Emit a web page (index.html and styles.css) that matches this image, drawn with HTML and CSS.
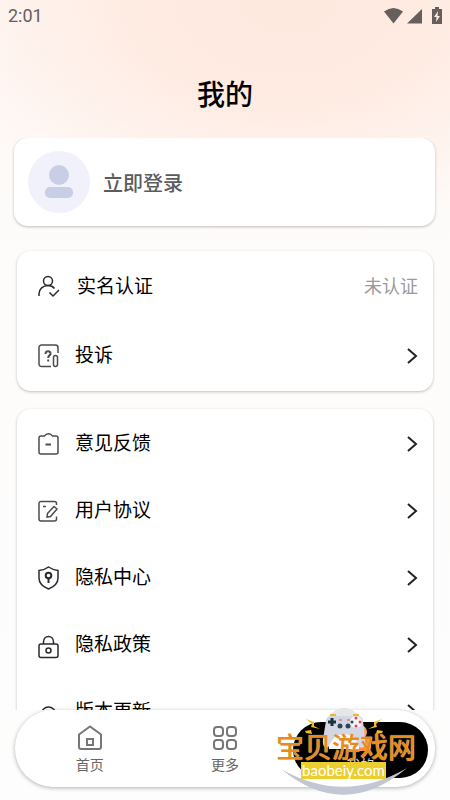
FILE: index.html
```
<!DOCTYPE html>
<html lang="zh-CN">

<head>
    <meta charset="UTF-8">
    <meta name="viewport" content="width=device-width, initial-scale=1.0">
    <title>我的</title>
    <link rel="stylesheet" href="styles.css">
</head>

<body>
    <div id="app">
        <div class="status-bar">
            <span>2:01</span>
            <div class="status-icons">
                <svg width="19" height="16" viewBox="0 0 19 16"><path d="M0 3.5Q9.500-3.500 19 3.500L9.500 15.500z" /></svg>
                <svg width="15" height="16" viewBox="0 0 15 16"><path d="M15 1v14.500H0z" /></svg>
                <svg class="battery" width="10" height="17" viewBox="0 0 10 17">
                    <path d="M3 0h4v2h3v15H0V2h3z" />
                    <path class="bolt" d="M6 4L2 10h2.500L4 15l4-6H5.500z" />
                </svg>
            </div>
        </div>

        <h1>我的</h1>

        <main>
            <button class="login card" type="button">
                <span class="avatar">
                    <svg width="28" height="34" viewBox="0 0 28 34">
                        <circle cx="14" cy="10" r="10" />
                        <rect x="0" y="22" width="28" height="11" rx="5" />
                    </svg>
                </span>
                <span>立即登录</span>
            </button>

            <ul class="card list">
                <li>
                    <a class="cell verify" href="#">
                        <svg class="icon" viewBox="0 0 22 22">
                            <circle cx="10" cy="5" r="4.500" />
                            <path d="M1 20v-2c0-5 4-8.500 9-8.500 3 0 5 1 6.500 3M11.500 16.500l3.500 3.500 6-6" />
                        </svg>
                        <span class="label">实名认证</span>
                        <span class="state">未认证</span>
                    </a>
                </li>
                <li>
                    <a class="cell" href="#">
                        <svg class="icon soft" viewBox="0 0 22 22">
                            <path d="M13 21.500H3.500a2.500 2.500 0 0 1-2.500-2.500V2.500A2.500 2.500 0 0 1 3.500 0h14A2.500 2.500 0 0 1 20 2.500V8" />
                            <rect x="15.500" y="10.500" width="4" height="11" rx="2" />
                            <path class="thick" d="M7.500 9c0-4 5.500-3.500 5 0-.3 1.500-2.300 1.500-2.300 4M10.200 14.500v2" />
                        </svg>
                        <span class="label">投诉</span>
                        <svg class="arrow" viewBox="0 0 12 18"><path d="M2 2l8 7-8 7" /></svg>
                    </a>
                </li>
            </ul>

            <ul class="card list">
                <li>
                    <a class="cell" href="#">
                        <svg class="icon soft" viewBox="0 0 22 22">
                            <path d="M3 3h3.500C7.500 1.200 8.500.7 10.500.7s3 .5 4 2.300H18a2 2 0 0 1 2 2v14a2 2 0 0 1-2 2H3a2 2 0 0 1-2-2V5a2 2 0 0 1 2-2z" />
                            <path class="thick" d="M7.500 11.500h5.500" />
                        </svg>
                        <span class="label">意见反馈</span>
                        <svg class="arrow" viewBox="0 0 12 18"><path d="M2 2l8 7-8 7" /></svg>
                    </a>
                </li>
                <li>
                    <a class="cell" href="#">
                        <svg class="icon soft" viewBox="0 0 22 22">
                            <path d="M18.500 5V3.500a2 2 0 0 0-2-2H3a2 2 0 0 0-2 2V19a2 2 0 0 0 2 2h13.500a2 2 0 0 0 2-2V16.500M5 6.500h3" />
                            <path d="M9.500 13.500l6.500-7 3 2.500-6.500 7.500-3.500.5z" />
                        </svg>
                        <span class="label">用户协议</span>
                        <svg class="arrow" viewBox="0 0 12 18"><path d="M2 2l8 7-8 7" /></svg>
                    </a>
                </li>
                <li>
                    <a class="cell" href="#">
                        <svg class="icon" viewBox="0 0 22 22">
                            <path d="M10.500 0c3 2 6 3 9.500 3.500V11c0 5.500-4.500 9-9.500 11C5.500 20 1 16.500 1 11V3.500C5 3 8 2 10.500 0z" />
                            <circle class="thick" cx="10.500" cy="8.500" r="2.800" />
                            <path class="thick" d="M10.500 11v5" />
                        </svg>
                        <span class="label">隐私中心</span>
                        <svg class="arrow" viewBox="0 0 12 18"><path d="M2 2l8 7-8 7" /></svg>
                    </a>
                </li>
                <li>
                    <a class="cell" href="#">
                        <svg class="icon" viewBox="0 0 22 22">
                            <path d="M5.500 10V8c0-7.500 10-7.500 10 0v2" />
                            <rect x="1" y="10" width="19" height="13.500" rx="2" />
                            <circle cx="10.500" cy="16.500" r="2.500" />
                        </svg>
                        <span class="label">隐私政策</span>
                        <svg class="arrow" viewBox="0 0 12 18"><path d="M2 2l8 7-8 7" /></svg>
                    </a>
                </li>
                <li>
                    <a class="cell" href="#">
                        <svg class="icon" viewBox="0 0 22 22"><circle cx="10.500" cy="13" r="7" /></svg>
                        <span class="label">版本更新</span>
                        <svg class="arrow" viewBox="0 0 12 18"><path d="M2 2l8 7-8 7" /></svg>
                    </a>
                </li>
            </ul>
        </main>

        <nav>
            <a class="tab" href="#">
                <svg width="26" height="26" viewBox="0 0 26 26">
                    <path d="M2 9.500L13 1.500l11 8V22a2 2 0 0 1-2 2H4a2 2 0 0 1-2-2z" />
                    <rect x="10" y="14" width="6" height="6" />
                </svg>
                <span>首页</span>
            </a>
            <a class="tab" href="#">
                <svg width="26" height="26" viewBox="0 0 26 26">
                    <rect x="2" y="2" width="9" height="9" rx="3" />
                    <rect x="15" y="2" width="9" height="9" rx="3" />
                    <rect x="2" y="15" width="9" height="9" rx="3" />
                    <rect x="15" y="15" width="9" height="9" rx="3" />
                </svg>
                <span>更多</span>
            </a>
            <a class="tab active" href="#">
                <svg width="26" height="26" viewBox="0 0 26 26">
                    <circle class="head" cx="13" cy="7" r="7" />
                    <rect x="2" y="13" width="22" height="13" rx="4" />
                </svg>
                <span>我的</span>
            </a>

            <div class="site-mark">
                <svg width="140" height="90" viewBox="0 0 140 90">
                    <path class="smile" d="M5 62Q68 114 131 61Q68 98 5 62z" />
                    <path class="dome" d="M50 20a18 19 0 0 1 36 0l-2 10H52z" />
                    <path class="face" d="M53 42c-2-14 8-17 15-17s17 3 15 17z" />
                    <path class="pad" d="M55 9h27c3 0 5 2 5 5l2 18c1 8-3 11-6 7-6-16-24-16-30 0-3 4-7 1-6-7l3-18c0-3 2-5 5-5z" />
                    <path class="trim" d="M54 8h6M77 8h6" />
                    <path class="cross" d="M56 11v8M52 15h8" />
                    <circle class="key" cx="64" cy="19" r="2.500" />
                    <circle class="key" cx="72" cy="19" r="2.500" />
                    <path class="red" d="M63 13h3M71 13h3" />
                    <circle class="disc" cx="80" cy="15" r="6" />
                    <circle class="dot-red" cx="80" cy="11" r="1.500" />
                    <circle class="dot-red" cx="80" cy="19" r="1.500" />
                    <circle class="key" cx="76" cy="15" r="1.500" />
                    <circle class="dot-red" cx="84" cy="15" r="1.500" />
                    <path class="spark" d="M30 12l8 3v4l6 3-9-2 1-3zM106 12l-8 3v4l-6 3 9-2-1-3zM29 24l6-1 1 4-6-1zM107 24l-6-1-1 4 6-1z" />
                </svg>
                <strong>宝贝游戏网</strong>
                <em>baobeiy.com</em>
            </div>
        </nav>
    </div>
</body>

</html>
```
FILE: styles.css
```
* {
    margin: 0;
    padding: 0;
    box-sizing: border-box;
}

html,
body {
    height: 100%;
}

body {
    font-family: Roboto, "Noto Sans CJK SC", sans-serif;
    color: #111;
}

a {
    color: inherit;
    text-decoration: none;
}

ul {
    list-style: none;
}

#app {
    height: 100%;
    display: flex;
    flex-direction: column;
    overflow: hidden;
    background: radial-gradient(ellipse 360px 240px at 64% 0, #fee9df 0, #feebe2 40%, rgba(254, 240, 233, 0) 100%), linear-gradient(#fff7f3, #fdfcfb 250px, #fdfdfd);
}

.status-bar {
    display: flex;
    justify-content: space-between;
    align-items: center;
    height: 31px;
    padding: 0 8px;
    font-size: 18px;
    color: #66605d;
}

.status-icons {
    display: flex;
    align-items: center;
    gap: 4px;
    fill: #665f5d;
}

.battery {
    margin-left: 6px;
}

.bolt {
    fill: #feece3;
}

h1 {
    padding: 43px 0 20px;
    text-align: center;
    font-size: 28px;
    font-weight: 500;
    line-height: 44px;
    color: #000;
}

main {
    flex: 1;
    min-height: 0;
    overflow: hidden;
    padding: 0 17px;
}

.card {
    background: #fff;
    border-radius: 14px;
    box-shadow: 0 1px 3px rgba(0, 0, 0, .25);
}

.login {
    display: flex;
    align-items: center;
    gap: 13px;
    width: calc(100% + 5px);
    height: 88px;
    margin: 0 -3px 25px;
    padding: 0 14px;
    border: 0;
    font: inherit;
    font-size: 20px;
    font-weight: 500;
    color: #5c5c5c;
}

.avatar {
    display: flex;
    justify-content: center;
    align-items: center;
    width: 62px;
    height: 62px;
    border-radius: 50%;
    background: #f1f1fb;
    fill: #c7cee6;
}

.list {
    margin-bottom: 18px;
    padding: 1px 0 2px;
}

.cell {
    display: flex;
    align-items: center;
    height: 67px;
    padding: 0 15px 0 21px;
    font-size: 19px;
    line-height: 26px;
}

.verify {
    height: 70px;
}

.verify .label {
    padding-left: 2px;
}

.icon {
    width: 22px;
    height: 22px;
    margin-right: 15px;
    overflow: visible;
    fill: none;
    stroke: #292b31;
    stroke-width: 1.5;
}

.soft {
    stroke: #4c4c4e;
}

.thick {
    stroke-width: 2;
}

.label {
    flex: 1;
    color: #000;
}

.state {
    font-size: 18px;
    color: #9a9a9a;
}

.arrow {
    width: 12px;
    height: 18px;
    fill: none;
    stroke: #222;
    stroke-width: 2;
}

nav {
    position: relative;
    display: flex;
    align-items: center;
    height: 77px;
    margin: 0 15px 13px;
    padding: 2px 7px 0;
    border-radius: 38px;
    background: #fff;
    box-shadow: 0 1px 4px rgba(0, 0, 0, .3);
}

.tab {
    flex: 1;
    display: flex;
    flex-direction: column;
    align-items: center;
    gap: 4px;
    font-size: 14px;
    line-height: 20px;
    color: #666;
}

.tab svg {
    fill: none;
    stroke: #777;
    stroke-width: 2;
}

.active {
    justify-content: center;
    height: 56px;
    border-radius: 28px;
    background: #000;
    color: #ddd;
}

.active svg {
    fill: #ff8b38;
    stroke: none;
}

.active .head {
    fill: #ffa45e;
}

/* 站点水印 */
.site-mark {
    position: absolute;
    right: 19px;
    top: -3px;
    width: 140px;
    height: 90px;
    text-align: center;
}

.site-mark svg {
    position: absolute;
    left: 0;
    top: 0;
}

.site-mark strong {
    position: absolute;
    left: 0;
    top: 24px;
    font-size: 28px;
    font-weight: 500;
    line-height: 36px;
    white-space: nowrap;
    color: #e78c18;
    text-shadow: 0 0 1px #ddd;
}

.site-mark em {
    position: absolute;
    left: 25px;
    top: 55px;
    width: 85px;
    font-family: Lato, sans-serif;
    font-size: 15px;
    font-style: normal;
    font-weight: 400;
    line-height: 17px;
    color: #fff;
    background: #ebce2f;
}

.smile {
    fill: #c3c6d3;
}

.dome {
    fill: #e5e7e5;
}

.pad {
    fill: #d5d6e3;
}

.face {
    fill: #f8f8f8;
}

.trim {
    stroke: #edb534;
    stroke-width: 2;
}

.cross {
    stroke: #17333e;
    stroke-width: 3;
}

.key {
    fill: #29475a;
}

.red {
    stroke: #e24852;
    stroke-width: 1;
}

.disc {
    fill: #f4f4f8;
}

.dot-red {
    fill: #e24852;
}

.spark {
    fill: #f5b921;
}
```
